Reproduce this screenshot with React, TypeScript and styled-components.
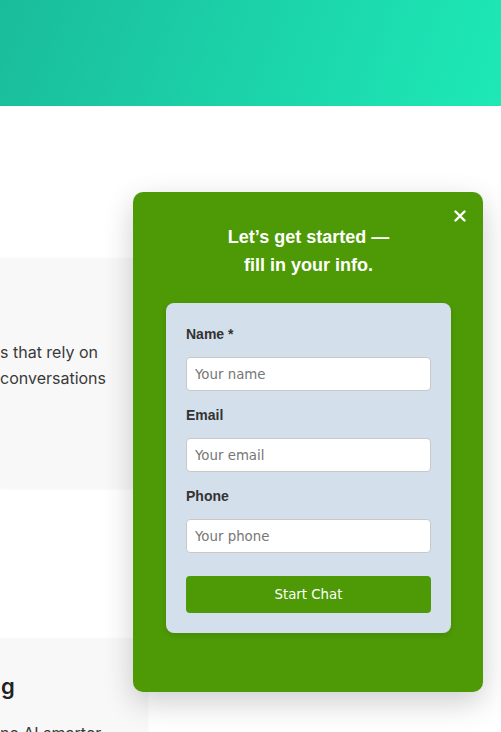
import React from "react";
import styled, { createGlobalStyle } from "styled-components";

const Global = createGlobalStyle`
  html, body { margin: 0; padding: 0; background: #ffffff; }
  body { font-family: Inter, "Liberation Sans", sans-serif; overflow: hidden; }
  * { box-sizing: border-box; }
`;

const Page = styled.div`
  width: 501px;
  height: 732px;
  overflow: hidden;
  position: relative;
`;

const Hero = styled.header`
  height: 106px;
  background: linear-gradient(110deg, #1abc9c 0%, #1de9b6 100%);
`;

const Section = styled.section<{ $gap: number }>`
  margin-top: ${(p) => p.$gap}px;
`;

const Card = styled.div<{ $height?: number }>`
  width: 148px;
  height: ${(p) => (p.$height ? `${p.$height}px` : "auto")};
  background: #f8f8f8;
  box-shadow: 0 1px 3px rgba(0, 0, 0, 0.04);
  overflow: hidden;
`;

const CardHeading = styled.h3`
  margin: 34px 0 0 1px;
  font-family: Inter, sans-serif;
  font-size: 22px;
  font-weight: 600;
  line-height: 28px;
  color: #222;
  white-space: nowrap;
`;

const CardText = styled.p<{ $top: number }>`
  margin: ${(p) => p.$top}px 0 0 0;
  font-family: Inter, sans-serif;
  font-size: 16px;
  line-height: 26px;
  color: #3a3a3a;
  white-space: pre;
`;

const Popup = styled.div`
  position: absolute;
  left: 133px;
  top: 192px;
  width: 350px;
  height: 500px;
  background: #4e9a06;
  border-radius: 10px;
  box-shadow: 0 10px 30px rgba(0, 0, 0, 0.2);
  padding: 31px 32px 0 33px;
  display: flex;
  flex-direction: column;
  align-items: stretch;
`;

const CloseButton = styled.button`
  position: absolute;
  top: 209px;
  left: 453px;
  width: 14px;
  height: 14px;
  padding: 0;
  border: none;
  background: transparent;
  display: flex;
  align-items: center;
  justify-content: center;
  cursor: pointer;
`;

const Title = styled.h2`
  margin: 0;
  font-family: "Liberation Sans", Arial, sans-serif;
  font-size: 18px;
  font-weight: 700;
  line-height: 28px;
  color: #ffffff;
  text-align: center;
`;

const FormCard = styled.form`
  margin-top: 24px;
  background: #d3dfeb;
  border-radius: 8px;
  padding: 21px 20px 20px 20px;
  display: flex;
  flex-direction: column;
  box-shadow: 0 2px 6px rgba(0, 0, 0, 0.12);
`;

const Field = styled.div`
  display: flex;
  flex-direction: column;
  gap: 13px;
  margin-bottom: 14px;
`;

const Label = styled.label`
  font-family: "Liberation Sans", Arial, sans-serif;
  font-size: 14px;
  font-weight: 700;
  line-height: 20px;
  color: #333;
`;

const Input = styled.input`
  height: 34px;
  width: 100%;
  border: 1px solid #c8c8c8;
  border-radius: 4px;
  background: #fff;
  padding: 0 8px;
  font-family: "DejaVu Sans", sans-serif;
  font-size: 13.333px;
  color: #333;
  outline: none;
  &::placeholder { color: #767676; }
`;

const Submit = styled.button`
  margin-top: 9px;
  height: 37px;
  width: 100%;
  border: none;
  border-radius: 4px;
  background: #4e9a06;
  color: #ffffff;
  font-family: "DejaVu Sans", sans-serif;
  font-size: 13.333px;
  cursor: pointer;
`;

export default function App() {
  return (
    <>
      <Global />
      <Page>
        <Hero />
        <Section $gap={152}>
          <Card $height={230}>
            <CardText $top={81}>{"s that rely on\nconversations"}</CardText>
          </Card>
        </Section>
        <Section $gap={150}>
          <Card $height={120}>
            <CardHeading>g</CardHeading>
            <CardText $top={20}>{"ne AI smarter"}</CardText>
          </Card>
        </Section>
        <Popup>
          <Title>
            Let’s get started —<br />fill in your info.
          </Title>
          <FormCard onSubmit={(e) => e.preventDefault()}>
            <Field>
              <Label>Name *</Label>
              <Input placeholder="Your name" />
            </Field>
            <Field>
              <Label>Email</Label>
              <Input placeholder="Your email" />
            </Field>
            <Field>
              <Label>Phone</Label>
              <Input placeholder="Your phone" />
            </Field>
            <Submit type="submit">Start Chat</Submit>
          </FormCard>
        </Popup>
        <CloseButton aria-label="Close">
          <svg width="12" height="12" viewBox="0 0 12 12">
            <path d="M1.5 1.5 L10.5 10.5 M10.5 1.5 L1.5 10.5" stroke="#fff" strokeWidth="2.4" strokeLinecap="round" />
          </svg>
        </CloseButton>
      </Page>
    </>
  );
}
